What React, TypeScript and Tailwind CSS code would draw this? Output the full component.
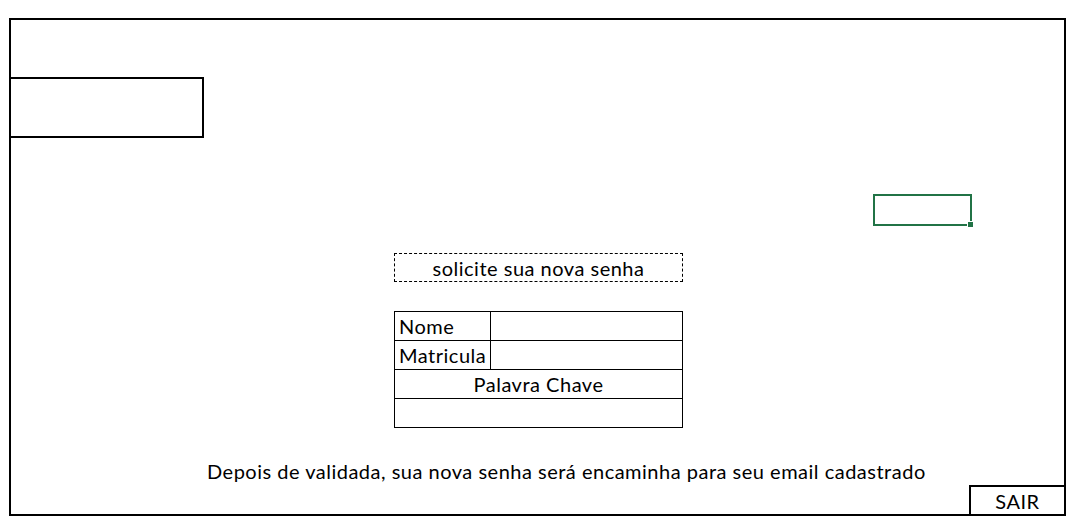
export default function App() {
  return (
    <div
      className="w-[1086px] h-[531px] bg-white pt-[18px] pl-[9px] text-black"
      style={{ fontFamily: "Lato, 'Open Sans', sans-serif" }}
    >
      <div className="w-[1057px] h-[498px] border-2 border-black flex flex-col">
        {/* top-left empty cell block */}
        <div className="-ml-[2px] mt-[57px] w-[195px] h-[61px] border-2 border-black" />

        {/* selected cell */}
        <div className="ml-[862px] mt-[56px] relative w-[99px] h-[32px] border-2 border-[#217346]">
          <div className="absolute -right-[4px] -bottom-[4px] w-[7px] h-[7px] bg-[#217346] border border-white" />
        </div>

        {/* title */}
        <div className="ml-[383px] mt-[27px] w-[289px] h-[29px] border border-dashed border-black flex items-center justify-center text-[20px] tracking-[0.5px] leading-none">
          solicite sua nova senha
        </div>

        {/* form table */}
        <table className="ml-[383px] mt-[29px] w-[289px] border-collapse text-[20px] tracking-[0.5px] leading-none">
          <tbody>
            <tr className="h-[29px]">
              <td className="w-[96px] border border-black px-[4px]">Nome</td>
              <td className="border border-black" />
            </tr>
            <tr className="h-[29px]">
              <td className="border border-black px-[4px]">Matricula</td>
              <td className="border border-black" />
            </tr>
            <tr className="h-[29px]">
              <td colSpan={2} className="border border-black text-center">
                Palavra Chave
              </td>
            </tr>
            <tr className="h-[29px]">
              <td colSpan={2} className="border border-black" />
            </tr>
          </tbody>
        </table>

        <p className="ml-[196px] mt-[33px] text-[20px] tracking-[0.5px] leading-none">
          Depois de validada, sua nova senha será encaminha para seu email cadastrado
        </p>

        {/* exit button */}
        <div className="mt-auto self-end -mr-[2px] -mb-[2px] w-[97px] h-[31px] border-2 border-black flex items-center justify-center text-[20px] tracking-[0.5px] leading-none">
          SAIR
        </div>
      </div>
    </div>
  );
}
